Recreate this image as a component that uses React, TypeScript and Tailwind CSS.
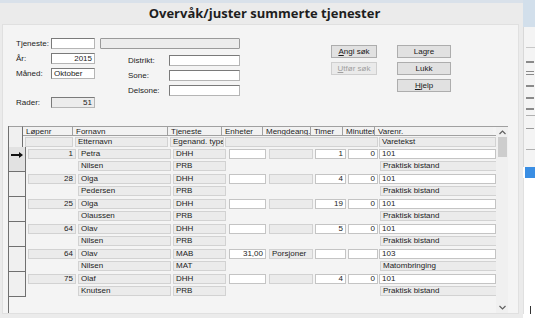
import React from "react";

type Rec = {
  nr: string;
  fornavn: string;
  etternavn: string;
  tjeneste: string;
  egenand: string;
  enheter: string;
  mengde: string;
  timer: string;
  minutter: string;
  varenr: string;
  varetekst: string;
};

const records: Rec[] = [
  { nr: "1", fornavn: "Petra", etternavn: "Nilsen", tjeneste: "DHH", egenand: "PRB", enheter: "", mengde: "", timer: "1", minutter: "0", varenr: "101", varetekst: "Praktisk bistand" },
  { nr: "28", fornavn: "Olga", etternavn: "Pedersen", tjeneste: "DHH", egenand: "PRB", enheter: "", mengde: "", timer: "4", minutter: "0", varenr: "101", varetekst: "Praktisk bistand" },
  { nr: "25", fornavn: "Olga", etternavn: "Olaussen", tjeneste: "DHH", egenand: "PRB", enheter: "", mengde: "", timer: "19", minutter: "0", varenr: "101", varetekst: "Praktisk bistand" },
  { nr: "64", fornavn: "Olav", etternavn: "Nilsen", tjeneste: "DHH", egenand: "PRB", enheter: "", mengde: "", timer: "5", minutter: "0", varenr: "101", varetekst: "Praktisk bistand" },
  { nr: "64", fornavn: "Olav", etternavn: "Nilsen", tjeneste: "MAB", egenand: "MAT", enheter: "31,00", mengde: "Porsjoner", timer: "", minutter: "", varenr: "103", varetekst: "Matombringing" },
  { nr: "75", fornavn: "Olaf", etternavn: "Knutsen", tjeneste: "DHH", egenand: "PRB", enheter: "", mengde: "", timer: "4", minutter: "0", varenr: "101", varetekst: "Praktisk bistand" },
];

function Field({ w, value = "", right = false, gray = false }: { w: string; value?: string; right?: boolean; gray?: boolean }) {
  return (
    <div
      className={`${w} h-[11px] border border-[#7a7a7a] border-r-[#b5b5b5] border-b-[#b5b5b5] ${gray ? "bg-[#ececec]" : "bg-white"} px-[2px] leading-[9px] ${right ? "text-right" : ""}`}
    >
      {value}
    </div>
  );
}

function Btn({ u, rest, w, disabled = false }: { u?: string; rest: string; w: string; disabled?: boolean }) {
  return (
    <div
      className={`${w} h-[13px] border flex items-center justify-center leading-none ${disabled ? "text-[#a0a0a0] border-[#cfcfcf] bg-[#eaeaea]" : "text-[#1a1a1a] border-[#adadad] bg-[#e1e1e1]"}`}
    >
      {u && <span className="underline">{u}</span>}
      {rest}
    </div>
  );
}

function Cell({ w, ml = "ml-[2px]", white = false, right = false, children }: { w: string; ml?: string; white?: boolean; right?: boolean; children?: React.ReactNode }) {
  return (
    <div
      className={`${w} ${ml} h-[10px] shrink-0 border ${white ? "bg-white border-[#c4c4c4]" : "bg-[#ebebeb] border-[#d2d2d2]"} px-[2px] leading-[8px] whitespace-nowrap overflow-hidden ${right ? "text-right" : ""}`}
    >
      {children}
    </div>
  );
}

function Head({ w, children, last = false }: { w: string; children?: React.ReactNode; last?: boolean }) {
  return (
    <div className={`${w} shrink-0 h-full bg-[#f2f2f2] ${last ? "" : "border-r border-[#a0a0a0]"} pl-[3px] leading-[9px] whitespace-nowrap overflow-hidden`}>
      {children}
    </div>
  );
}

export default function App() {
  return (
    <div className="w-[535px] h-[325px] bg-white flex overflow-hidden text-[8px] text-[#1c1c1c]" style={{ fontFamily: '"Liberation Sans", Arial, sans-serif' }}>
      <div className="w-[523px] h-[318px] flex flex-col bg-[#ebebeb] border-t-[3px] border-[#d9e1ea]">
        <div className="h-[21px] shrink-0 flex items-center justify-center">
          <span className="text-[13px] font-bold text-[#1e1e1e] ml-[6px]" style={{ fontFamily: '"Open Sans", sans-serif' }}>
            Overvåk/juster summerte tjenester
          </span>
        </div>
        <div className="ml-[2px] w-[517px] h-[290px] bg-[#f4f4f4] border border-[#e0e0e0] flex flex-col">
          {/* form */}
          <div className="flex ml-[13px] mt-[13px]">
            <div className="flex flex-col w-[224px]">
              <div className="flex items-center h-[11px]">
                <span className="w-[35px]">Tjeneste:</span>
                <Field w="w-[44px]" />
                <div className="ml-[5px] w-[140px] h-[11px] border border-[#9a9a9a] rounded-[1px] bg-[#ececec]" />
              </div>
              <div className="flex mt-[4px]">
                <div className="flex flex-col w-[112px]">
                  <div className="flex items-center h-[11px]">
                    <span className="w-[35px]">År:</span>
                    <Field w="w-[44px]" value="2015" right />
                  </div>
                  <div className="flex items-center h-[11px] mt-[4px]">
                    <span className="w-[35px]">Måned:</span>
                    <Field w="w-[44px]" value="Oktober" />
                  </div>
                  <div className="flex items-center h-[11px] mt-[18px]">
                    <span className="w-[35px]">Rader:</span>
                    <Field w="w-[44px]" value="51" right gray />
                  </div>
                </div>
                <div className="flex flex-col mt-[2px]">
                  <div className="flex items-center h-[11px]">
                    <span className="w-[41px]">Distrikt:</span>
                    <Field w="w-[71px]" />
                  </div>
                  <div className="flex items-center h-[11px] mt-[4px]">
                    <span className="w-[41px]">Sone:</span>
                    <Field w="w-[71px]" />
                  </div>
                  <div className="flex items-center h-[11px] mt-[4px]">
                    <span className="w-[41px]">Delsone:</span>
                    <Field w="w-[71px]" />
                  </div>
                </div>
              </div>
            </div>
            <div className="flex ml-[91px] mt-[7px] gap-[20px]">
              <div className="flex flex-col gap-[4px]">
                <Btn u="A" rest="ngi søk" w="w-[46px]" />
                <Btn u="U" rest="tfør søk" w="w-[46px]" disabled />
              </div>
              <div className="flex flex-col gap-[4px]">
                <Btn rest="Lagre" w="w-[54px]" />
                <Btn rest="Lukk" w="w-[54px]" />
                <Btn u="H" rest="jelp" w="w-[54px]" />
              </div>
            </div>
          </div>

          {/* grid */}
          <div className="ml-[5px] mt-[18px] w-[500px] flex-1 flex">
            <div className="w-[488px] border-l border-[#707070] flex flex-col">
              {/* header */}
              <div className="flex h-[21px]">
                <div className="w-[17px] h-full bg-[#f0f0f0] border-r border-[#707070] border-t border-t-[#a0a0a0]" />
                <div className="flex flex-col">
                  <div className="flex h-[10px] border-t border-b border-[#a0a0a0]">
                    <Head w="w-[50px]">Løpenr</Head>
                    <Head w="w-[95px]">Fornavn</Head>
                    <Head w="w-[54px]">Tjeneste</Head>
                    <Head w="w-[41px]">Enheter</Head>
                    <Head w="w-[48px]">Mengdeang.</Head>
                    <Head w="w-[32px]">Timer</Head>
                    <Head w="w-[32px]">Minutter</Head>
                    <Head w="w-[118px]" last>Varenr.</Head>
                  </div>
                  <div className="flex h-[11px] items-center">
                    <Cell w="w-[48px]" />
                    <Cell w="w-[93px]" ml="ml-[2px]">Etternavn</Cell>
                    <Cell w="w-[54px]" ml="ml-[2px]">Egenand. type</Cell>
                    <Cell w="w-[153px]" ml="ml-[1px]" />
                    <Cell w="w-[117px]" ml="ml-[1px]">Varetekst</Cell>
                  </div>
                </div>
              </div>
              {/* records */}
              {records.map((r, i) => (
                <div key={i} className="flex h-[25px]">
                  <div className={`w-[17px] h-full shrink-0 border-r border-b border-[#707070] flex items-start justify-center pt-[5px] ${i === 0 ? "bg-[#e2e2e2]" : "bg-[#f0f0f0]"}`}>
                    {i === 0 && (
                      <svg width="12" height="6" viewBox="0 0 12 6">
                        <path d="M0 2h8V0l4 3-4 3V4H0z" fill="#111" />
                      </svg>
                    )}
                  </div>
                  <div className="flex flex-col">
                    <div className="flex h-[12px] items-end">
                      <Cell w="w-[48px]" right>{r.nr}</Cell>
                      <Cell w="w-[93px]" ml="ml-[2px]">{r.fornavn}</Cell>
                      <Cell w="w-[53px]" ml="ml-[2px]">{r.tjeneste}</Cell>
                      <Cell w="w-[37px]" ml="ml-[3px]" white right>{r.enheter}</Cell>
                      <Cell w="w-[44px]" ml="ml-[3px]">{r.mengde}</Cell>
                      <Cell w="w-[31px]" ml="ml-[2px]" white right>{r.timer}</Cell>
                      <Cell w="w-[30px]" ml="ml-[2px]" white right>{r.minutter}</Cell>
                      <Cell w="w-[117px]" ml="ml-[1px]" white>{r.varenr}</Cell>
                    </div>
                    <div className="flex h-[13px] items-center">
                      <Cell w="w-[93px]" ml="ml-[52px]">{r.etternavn}</Cell>
                      <Cell w="w-[53px]" ml="ml-[2px]">{r.egenand}</Cell>
                      <Cell w="w-[117px]" ml="ml-[154px]">{r.varetekst}</Cell>
                    </div>
                  </div>
                </div>
              ))}
            </div>
            {/* scrollbar */}
            <div className="w-[12px] bg-[#f0f0f0] border-t border-[#a0a0a0] flex flex-col items-center">
              <svg width="7" height="5" viewBox="0 0 7 5" className="mt-[3px]">
                <path d="M0.5 4L3.5 1L6.5 4" stroke="#606060" strokeWidth="1.2" fill="none" />
              </svg>
              <div className="w-[9px] h-[20px] bg-[#cdcdcd] mt-[2px]" />
              <div className="flex-1" />
              <svg width="7" height="5" viewBox="0 0 7 5" className="mb-[3px]">
                <path d="M0.5 1L3.5 4L6.5 1" stroke="#606060" strokeWidth="1.2" fill="none" />
              </svg>
            </div>
          </div>
        </div>
      </div>

      {/* window behind, right edge */}
      <div className="w-[12px] h-[325px] flex flex-col">
        <div className="h-[27px] bg-[#d2dfeb]" />
        <div className="h-[140px] bg-[#f4f4f4] border-l border-[#d8d8d8] flex flex-col pl-[2px]">
          <div className="h-[1px] bg-[#c8c8c8] mt-[20px]" />
          <div className="h-[2px] w-[8px] bg-[#8a8a8a] mt-[13px]" />
          <div className="h-[1px] w-[8px] bg-[#8a8a8a] mt-[8px]" />
          <div className="h-[1px] w-[8px] bg-[#8a8a8a] mt-[2px]" />
          <div className="h-[2px] w-[8px] bg-[#8a8a8a] mt-[10px]" />
          <div className="h-[2px] w-[8px] bg-[#8a8a8a] mt-[10px]" />
          <div className="h-[2px] w-[8px] bg-[#8a8a8a] mt-[9px]" />
          <div className="h-[1px] bg-[#b0b0b0] mt-[5px]" />
          <div className="h-[1px] w-[8px] bg-[#9a9a9a] mt-[12px]" />
          <div className="h-[1px] bg-[#b0b0b0] mt-[20px]" />
        </div>
        <div className="h-[11px] bg-[#3a8ee3] ml-[2px]" />
        <div className="h-[136px] bg-white border-l border-[#e0e0e0] flex items-end pl-[6px]">
          <div className="w-[1px] h-[8px] bg-[#333]" />
        </div>
      </div>
    </div>
  );
}
